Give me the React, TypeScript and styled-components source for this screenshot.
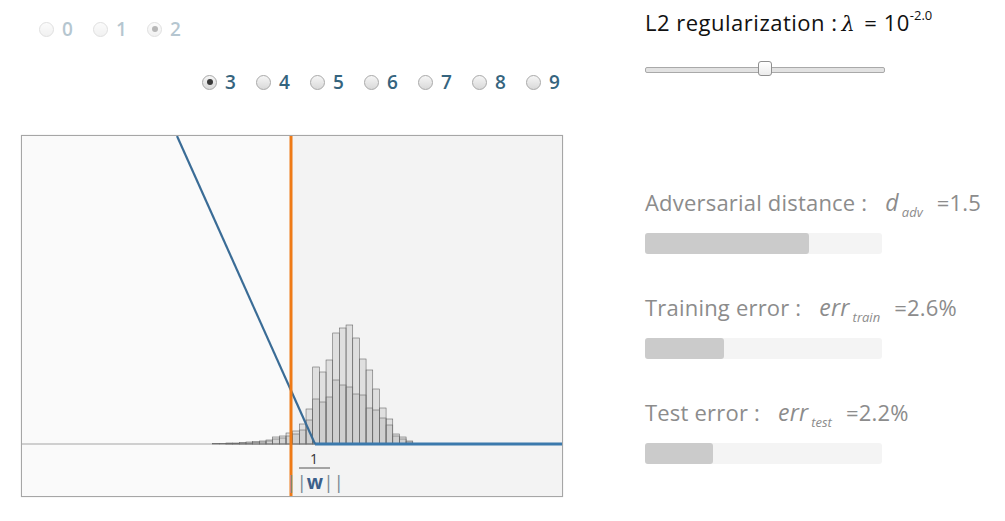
import React from 'react'
import styled, { createGlobalStyle } from 'styled-components'

const GlobalStyle = createGlobalStyle`
  body {
    margin: 0;
    background: #ffffff;
    font-family: 'Open Sans', 'Noto Sans', sans-serif;
  }
`

const Page = styled.div`
  display: flex;
  padding-left: 21px;
  width: 1005px;
  height: 521px;
  box-sizing: border-box;
  overflow: hidden;
`

const LeftColumn = styled.div`
  width: 542px;
  display: flex;
  flex-direction: column;
`

const RadioRow = styled.div<{ $align: 'start' | 'end'; $faded?: boolean }>`
  display: flex;
  justify-content: ${({ $align }) => ($align === 'end' ? 'flex-end' : 'flex-start')};
  gap: 20px;
  height: 28px;
  align-items: center;
  margin-top: ${({ $align }) => ($align === 'end' ? '25px' : '15px')};
  padding: ${({ $align }) => ($align === 'end' ? '0 3px 0 0' : '0 0 0 18px')};
  opacity: ${({ $faded }) => ($faded ? 0.36 : 1)};
`

const RadioItem = styled.label`
  display: flex;
  align-items: center;
  gap: 8px;
  font-size: 19px;
  font-weight: 600;
  color: #35647e;
  width: 34px;
`

const RadioDot = styled.span<{ $checked?: boolean }>`
  flex: none;
  width: 13px;
  height: 13px;
  border-radius: 50%;
  border: 1px solid #a9a9a9;
  background: linear-gradient(#f6f6f6, #d9d9d9);
  display: flex;
  align-items: center;
  justify-content: center;
  &::after {
    content: '';
    width: 6px;
    height: 6px;
    border-radius: 50%;
    background: #3a3a3a;
    display: ${({ $checked }) => ($checked ? 'block' : 'none')};
  }
`

const ChartBox = styled.div`
  margin-top: 39px;
  width: 540px;
  height: 360px;
  border: 1px solid #a6a6a6;
  box-shadow: 0 0 1px #cfcfcf;
  background: #fafafa;
`

const RightColumn = styled.div`
  margin-left: 82px;
  width: 350px;
  display: flex;
  flex-direction: column;
  padding-top: 6px;
`

const Title = styled.div`
  font-size: 22px;
  line-height: 32px;
  letter-spacing: 0.5px;
  color: #111;
  white-space: nowrap;
  & i {
    font-family: 'DejaVu Serif', serif;
    font-size: 21px;
    margin: 0 9px 0 4px;
  }
  & sup {
    font-size: 13px;
    line-height: 0;
    vertical-align: 11px;
    letter-spacing: 0;
  }
`

const Slider = styled.div`
  position: relative;
  margin-top: 27px;
  width: 238px;
  height: 4px;
  border-radius: 2px;
  background: #e2e2e2;
  border: 1px solid #a9a9a9;
`

const Thumb = styled.div`
  position: absolute;
  top: -7px;
  width: 14px;
  height: 15px;
  box-sizing: border-box;
  border-radius: 3px;
  border: 1px solid #8f8f8f;
  background: linear-gradient(#ffffff, #ececec);
`

const Metrics = styled.div`
  margin-top: 114px;
  display: flex;
  flex-direction: column;
  gap: 38px;
`

const MetricBlock = styled.div`
  display: flex;
  flex-direction: column;
  gap: 16px;
`

const MetricLabel = styled.div`
  font-size: 22px;
  line-height: 30px;
  height: 30px;
  letter-spacing: 0.2px;
  color: #8c8c8c;
  white-space: nowrap;
  & .sym {
    font-style: italic;
    margin-left: 18px;
    font-size: 23px;
  }
  & sub {
    font-style: italic;
    font-size: 13px;
    line-height: 0;
    vertical-align: -6px;
    margin: 0 14px 0 3px;
    letter-spacing: 0;
  }
`

const BarTrack = styled.div`
  width: 237px;
  height: 21px;
  border-radius: 3px;
  background: #f4f4f4;
  display: flex;
`

const BarFill = styled.div`
  height: 100%;
  border-radius: 3px;
  background: #cbcbcb;
`

// chart coordinates are page coords minus box origin
const OX = 22
const OY = 136
const BASE = 444
const BIN = 6.67
const FIRST = 212.65

const lightTops = [
  443.5, 443.5, 443, 443, 442.5, 442, 441.5, 441, 440, 437, 436, 433, 431, 424, 409, 367, 372, 360, 333, 328, 325,
  338, 359, 370, 389, 408, 419, 434, 437, 441,
]
const darkTops = [
  444, 444, 443.5, 443.5, 443, 443, 442.5, 442, 441, 439, 438, 436, 434, 430, 420, 399, 402, 397, 380, 385, 387, 394,
  395, 408, 410, 418, 425, 436, 439, 442,
]

const Histogram = ({ tops }: { tops: number[] }) => (
  <g>
    {tops.map((top, i) => {
      const h = BASE - top
      if (h <= 0) return null
      return (
        <rect
          key={i}
          x={FIRST + i * BIN - OX}
          y={top - OY}
          width={BIN}
          height={h}
          fill="rgba(160,160,160,0.24)"
          stroke="#6a6a6a"
          strokeWidth={0.6}
        />
      )
    })}
  </g>
)

const ChartSvg = styled.svg`
  display: block;
`

const Chart = () => (
  <ChartSvg width={540} height={360}>
    <rect x={291 - OX} y={0} width={540} height={360} fill="#f3f3f3" />
    <line x1={0} y1={BASE - OY} x2={315 - OX} y2={BASE - OY} stroke="#a4a4a4" strokeWidth={1} />
    <Histogram tops={lightTops} />
    <Histogram tops={darkTops} />
    <line x1={315 - OX} y1={BASE - OY} x2={540} y2={BASE - OY} stroke="#3b79ac" strokeWidth={3} />
    <line x1={177 - OX} y1={0} x2={315 - OX} y2={BASE - OY} stroke="#3a6c96" strokeWidth={2.2} />
    <line x1={291 - OX} y1={0} x2={291 - OX} y2={360} stroke="#ee7a16" strokeWidth={3} />
    <text x={314 - OX} y={464 - OY} textAnchor="middle" fontSize={14} fill="#333" fontFamily="Open Sans, sans-serif">
      1
    </text>
    <line x1={299 - OX} y1={468 - OY} x2={330 - OX} y2={468 - OY} stroke="#555" strokeWidth={1} />
    <text x={315 - OX} y={489 - OY} textAnchor="middle" fontSize={19} fontFamily="Open Sans, sans-serif">
      <tspan fill="#7a8a95">||</tspan>
      <tspan fill="#3b5f8a" fontWeight={700}>w</tspan>
      <tspan fill="#7a8a95">||</tspan>
    </text>
  </ChartSvg>
)

type MetricProps = { name: string; sym: string; sub: string; value: string; fill: number }

const Metric = ({ name, sym, sub, value, fill }: MetricProps) => (
  <MetricBlock>
    <MetricLabel>
      {name} :<span className="sym">{sym}</span>
      <sub>{sub}</sub>={value}
    </MetricLabel>
    <BarTrack>
      <BarFill style={{ width: `${fill * 100}%` }} />
    </BarTrack>
  </MetricBlock>
)

const SLIDER_MIN = -5
const SLIDER_MAX = 1
const lambdaExp = -2.0

export default function App() {
  const topDigits = [0, 1, 2]
  const digits = [3, 4, 5, 6, 7, 8, 9]
  const thumbLeft = ((lambdaExp - SLIDER_MIN) / (SLIDER_MAX - SLIDER_MIN)) * 224

  return (
    <Page>
      <GlobalStyle />
      <LeftColumn>
        <RadioRow $align="start" $faded>
          {topDigits.map((d) => (
            <RadioItem key={d}>
              <RadioDot $checked={d === 2} />
              {d}
            </RadioItem>
          ))}
        </RadioRow>
        <RadioRow $align="end">
          {digits.map((d) => (
            <RadioItem key={d}>
              <RadioDot $checked={d === 3} />
              {d}
            </RadioItem>
          ))}
        </RadioRow>
        <ChartBox>
          <Chart />
        </ChartBox>
      </LeftColumn>
      <RightColumn>
        <Title>
          L2 regularization :<i>λ</i>= 10<sup>{lambdaExp.toFixed(1)}</sup>
        </Title>
        <Slider>
          <Thumb style={{ left: thumbLeft }} />
        </Slider>
        <Metrics>
          <Metric name="Adversarial distance" sym="d" sub="adv" value="1.5" fill={0.69} />
          <Metric name="Training error" sym="err" sub="train" value="2.6%" fill={0.333} />
          <Metric name="Test error" sym="err" sub="test" value="2.2%" fill={0.287} />
        </Metrics>
      </RightColumn>
    </Page>
  )
}
